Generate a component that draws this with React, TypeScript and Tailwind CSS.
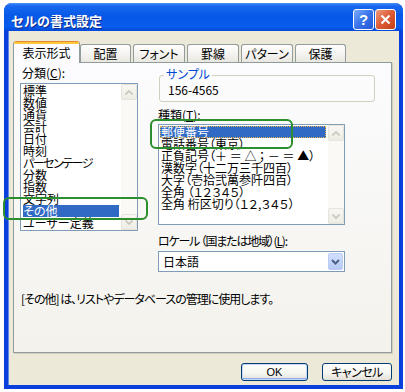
import React from "react";

function Chevron({ dir, color = "#C9C6B8" }: { dir: "up" | "down"; color?: string }) {
  return (
    <svg width="8" height="5" viewBox="0 0 8 5">
      <polyline
        points={dir === "up" ? "0.5,4.5 4,1 7.5,4.5" : "0.5,0.5 4,4 7.5,0.5"}
        fill="none"
        stroke={color}
        strokeWidth="1.6"
      />
    </svg>
  );
}

function ScrollBtn({ dir }: { dir: "up" | "down" }) {
  return (
    <div className="h-[16px] w-[16px] flex items-center justify-center rounded-[2px] border border-[#E6E4DA] bg-[linear-gradient(to_bottom,#F8F7F3,#EDECE4)]">
      <Chevron dir={dir} />
    </div>
  );
}

function ScrollBar() {
  return (
    <div className="w-[16px] h-full flex flex-col justify-between bg-[#FAF9F6]">
      <ScrollBtn dir="up" />
      <ScrollBtn dir="down" />
    </div>
  );
}

const categories = [
  "標準",
  "数値",
  "通貨",
  "会計",
  "日付",
  "時刻",
  "パーセンテージ",
  "分数",
  "指数",
  "文字列",
  "その他",
  "ユーザー定義",
];

const types = [
  "郵便番号",
  "電話番号（東京）",
  "正負記号（＋ ＝ △ ； － ＝ ▲）",
  "漢数字（十二万三千四百）",
  "大字（壱拾弐萬参阡四百）",
  "全角 （１２３４５）",
  "全角 桁区切り（１２,３４５）",
];

function Tab({ label }: { label: string }) {
  return (
    <div className="h-[18px] flex items-center justify-center rounded-t-[3px] border border-b-0 border-[#919B9C] bg-[linear-gradient(to_bottom,#FEFEFE,#F3F2EE_60%,#E8E7E0)]">
      {label}
    </div>
  );
}

export default function App() {
  return (
    <div className="relative w-[405px] h-[392px] bg-white pt-[3px] pl-[4px] font-['Noto_Sans_CJK_JP','Noto_Sans_CJK_SC',sans-serif] text-[12px] leading-[12px] text-black [font-feature-settings:'palt']">
      <div className="w-[399px] h-[386px] flex flex-col rounded-t-[8px] overflow-hidden bg-[#0A3FDB]">
        {/* Title bar */}
        <div className="h-[28px] flex items-start pt-[6px] pl-[7px] pr-[7px] bg-[linear-gradient(to_bottom,#4A93F8_0%,#1868F0_10%,#0758E6_45%,#085CEC_85%,#0448D8_100%)]">
          <div className="flex-1 pt-[5px] text-[13px] leading-[13px] font-bold text-white [font-feature-settings:normal] [text-shadow:1px_1px_#0B2A8C]">
            セルの書式設定
          </div>
          <div className="flex gap-[1px]">
            <div className="w-[21px] h-[21px] rounded-[3px] border border-white bg-[linear-gradient(135deg,#79AAFB,#3A73E8_50%,#2458D6)] flex items-center justify-center font-['Liberation_Sans',sans-serif] font-bold text-[15px] leading-[15px] text-white">
              ?
            </div>
            <div className="w-[21px] h-[21px] rounded-[3px] border border-white bg-[linear-gradient(135deg,#EE9A7C,#DD5A34_50%,#C33E17)] flex items-center justify-center">
              <svg width="11" height="11" viewBox="0 0 11 11">
                <line x1="1.5" y1="1.5" x2="9.5" y2="9.5" stroke="white" strokeWidth="2.2" />
                <line x1="9.5" y1="1.5" x2="1.5" y2="9.5" stroke="white" strokeWidth="2.2" />
              </svg>
            </div>
          </div>
        </div>

        {/* Body */}
        <div className="flex-1 mx-[4px] mb-[4px] bg-[#ECE9D8] border-l border-[#5E86EC] flex flex-col pt-[10px] pl-[4px]">
          {/* Tabs */}
          <div className="h-[21px] flex items-end">
            <div className="relative z-10 mb-[-1px] w-[67px] h-[22px] flex flex-col rounded-t-[3px] overflow-hidden border-x border-[#919B9C] bg-[#FCFCFE]">
              <div className="h-[1px] bg-[#E68B2C]" />
              <div className="h-[2px] bg-[#FFC73C]" />
              <div className="flex-1 flex items-center justify-center pb-[1px]">表示形式</div>
            </div>
            <div className="w-[51px]">
              <Tab label="配置" />
            </div>
            <div className="w-[52px] ml-[2px]">
              <Tab label="フォント" />
            </div>
            <div className="w-[52px] ml-[2px]">
              <Tab label="罫線" />
            </div>
            <div className="w-[52px] ml-[2px]">
              <Tab label="パターン" />
            </div>
            <div className="w-[51px] ml-[2px]">
              <Tab label="保護" />
            </div>
          </div>

          {/* Panel */}
          <div className="w-[379px] h-[291px] border border-[#919B9C] shadow-[1px_1px_0_#D0CEBF] bg-[linear-gradient(to_bottom,#FCFCFE,#F3F2EC)] pl-[6px] pt-[4px] flex flex-col">
            <div className="flex gap-[20px]">
              {/* Left column */}
              <div className="w-[118px] flex flex-col">
                <div className="h-[12px] ml-[2px]">
                  分類(<span className="underline">C</span>):
                </div>
                <div className="mt-[4px] h-[148px] border border-[#7F9DB9] bg-white flex">
                  <div className="flex-1 pl-[2px] pr-[2px] pt-[1px] flex flex-col">
                    {categories.map((c) => (
                      <div
                        key={c}
                        className={
                          c === "その他"
                            ? "h-[12px] whitespace-nowrap bg-[#316AC5] text-white"
                            : c === "パーセンテージ"
                            ? "h-[12px] whitespace-nowrap tracking-[-1.5px]"
                            : "h-[12px] whitespace-nowrap"
                        }
                      >
                        {c}
                      </div>
                    ))}
                  </div>
                  <ScrollBar />
                </div>
              </div>

              {/* Right column */}
              <div className="w-[217px] flex flex-col">
                <div className="relative mt-[8px] ml-[1px] h-[27px] rounded-[3px] border border-[#D0D0BF] pl-[8px] pt-[8px]">
                  <div className="absolute left-[4px] top-[-8px] px-[2px] bg-[#FBFBFB] text-[#0046D5]">
                    サンプル
                  </div>
                  <div>156-4565</div>
                </div>
                <div className="mt-[7px] h-[12px]">
                  種類(<span className="underline">T</span>):
                </div>
                <div className="mt-[3px] w-[187px] h-[101px] border border-[#7F9DB9] bg-white flex">
                  <div className="flex-1 pl-[1px] pr-[2px] pt-[1px] flex flex-col">
                    {types.map((t, i) => (
                      <div
                        key={t}
                        className={
                          i === 0
                            ? "h-[12px] whitespace-nowrap pl-[1px] bg-[#316AC5] text-white outline outline-1 outline-dotted outline-[#E8B24C] -outline-offset-1"
                            : "h-[12px] whitespace-nowrap pl-[1px]"
                        }
                      >
                        {t}
                      </div>
                    ))}
                  </div>
                  <ScrollBar />
                </div>
                <div className="mt-[10px] h-[12px] whitespace-nowrap tracking-[-1.2px]">
                  ロケール （国または地域）(<span className="underline">L</span>):
                </div>
                <div className="mt-[4px] w-[187px] h-[21px] border border-[#7F9DB9] bg-white flex items-center justify-between pl-[4px] pr-[1px]">
                  <span>日本語</span>
                  <div className="w-[15px] h-[17px] rounded-[2px] border border-[#BCCDF5] bg-[linear-gradient(to_bottom,#D2DFFD,#B6C9F7)] flex items-center justify-center">
                    <svg width="9" height="6" viewBox="0 0 9 6">
                      <polyline points="1,1 4.5,4.5 8,1" fill="none" stroke="#4D6185" strokeWidth="2" />
                    </svg>
                  </div>
                </div>
              </div>
            </div>
            <div className="mt-[21px] ml-[1px] h-[12px] whitespace-nowrap tracking-[-1px]">
              [その他] は、リストやデータベースの管理に使用します。
            </div>
          </div>

          {/* Buttons */}
          <div className="mt-[10px] flex justify-end gap-[14px] pr-[7px]">
            <div className="w-[67px] h-[18px] rounded-[3px] border border-[#003C74] bg-[linear-gradient(to_bottom,#FFFFFF,#F4F4F0_60%,#E2DFD5)] shadow-[inset_0_0_0_1px_#C6D8F7,inset_0_-1px_0_1px_#8FAAEA] flex items-center justify-center font-['Liberation_Sans',sans-serif] text-[11px]">
              OK
            </div>
            <div className="w-[70px] h-[18px] rounded-[3px] border border-[#003C74] bg-[linear-gradient(to_bottom,#FFFFFF,#F4F4F0_60%,#E2DFD5)] flex items-center justify-center tracking-[-0.5px]">
              キャンセル
            </div>
          </div>
        </div>
      </div>

      {/* Green annotation rectangles */}
      <div className="absolute left-[3px] top-[197px] w-[145px] h-[23px] rounded-[6px] border-2 border-[#2C8E2C]" />
      <div className="absolute left-[150px] top-[119px] w-[143px] h-[30px] rounded-[6px] border-2 border-[#2C8E2C]" />
    </div>
  );
}
